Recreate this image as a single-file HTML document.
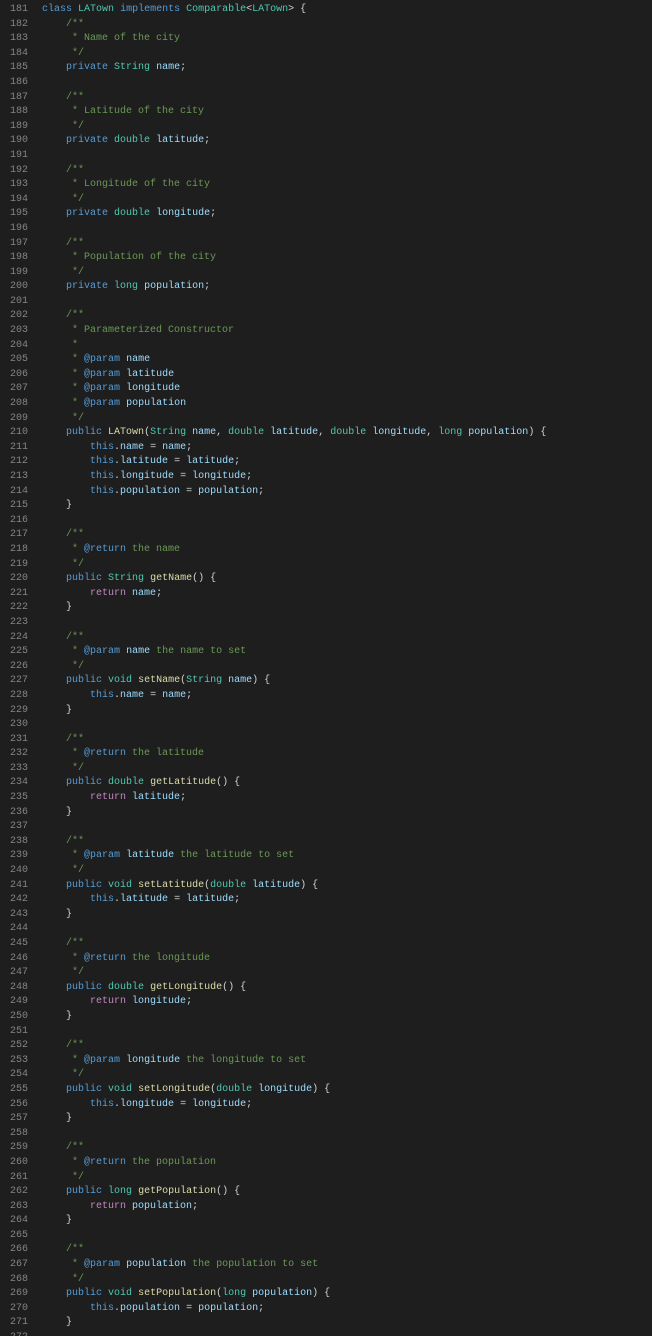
<!DOCTYPE html>
<html><head><meta charset="utf-8"><style>
html,body{margin:0;padding:0;background:#1e1e1e;width:652px;height:1336px;overflow:hidden}
.w{position:relative;top:3px;font-family:"Liberation Mono",monospace;font-size:10px;line-height:14.6px;color:#d4d4d4}
.l{height:14.6px;white-space:pre;position:relative}
.n{position:absolute;left:0;width:28px;text-align:right;color:#858585}
.x{position:absolute;left:42px}
.k{color:#569cd6}.t{color:#4ec9b0}.v{color:#9cdcfe}.f{color:#dcdcaa}.c{color:#6a9955}.r{color:#c586c0}
</style></head><body><div class="w" id="w"></div>
<script>
var L=[
'<span class="k">class</span> <span class="t">LATown</span> <span class="k">implements</span> <span class="t">Comparable</span>&lt;<span class="t">LATown</span>&gt; {',
'    <span class="c">/**</span>',
'    <span class="c"> * Name of the city</span>',
'    <span class="c"> */</span>',
'    <span class="k">private</span> <span class="t">String</span> <span class="v">name</span>;',
'',
'    <span class="c">/**</span>',
'    <span class="c"> * Latitude of the city</span>',
'    <span class="c"> */</span>',
'    <span class="k">private</span> <span class="t">double</span> <span class="v">latitude</span>;',
'',
'    <span class="c">/**</span>',
'    <span class="c"> * Longitude of the city</span>',
'    <span class="c"> */</span>',
'    <span class="k">private</span> <span class="t">double</span> <span class="v">longitude</span>;',
'',
'    <span class="c">/**</span>',
'    <span class="c"> * Population of the city</span>',
'    <span class="c"> */</span>',
'    <span class="k">private</span> <span class="t">long</span> <span class="v">population</span>;',
'',
'    <span class="c">/**</span>',
'    <span class="c"> * Parameterized Constructor</span>',
'    <span class="c"> *</span>',
'    <span class="c"> * </span><span class="k">@param</span> <span class="v">name</span>',
'    <span class="c"> * </span><span class="k">@param</span> <span class="v">latitude</span>',
'    <span class="c"> * </span><span class="k">@param</span> <span class="v">longitude</span>',
'    <span class="c"> * </span><span class="k">@param</span> <span class="v">population</span>',
'    <span class="c"> */</span>',
'    <span class="k">public</span> <span class="f">LATown</span>(<span class="t">String</span> <span class="v">name</span>, <span class="t">double</span> <span class="v">latitude</span>, <span class="t">double</span> <span class="v">longitude</span>, <span class="t">long</span> <span class="v">population</span>) {',
'        <span class="k">this</span>.<span class="v">name</span> = <span class="v">name</span>;',
'        <span class="k">this</span>.<span class="v">latitude</span> = <span class="v">latitude</span>;',
'        <span class="k">this</span>.<span class="v">longitude</span> = <span class="v">longitude</span>;',
'        <span class="k">this</span>.<span class="v">population</span> = <span class="v">population</span>;',
'    }',
''];
function getter(t,n,N){return['    <span class="c">/**</span>','    <span class="c"> * </span><span class="k">@return</span><span class="c"> the '+n+'</span>','    <span class="c"> */</span>','    <span class="k">public</span> <span class="t">'+t+'</span> <span class="f">get'+N+'</span>() {','        <span class="r">return</span> <span class="v">'+n+'</span>;','    }',''];}
function setter(t,n,N){return['    <span class="c">/**</span>','    <span class="c"> * </span><span class="k">@param</span> <span class="v">'+n+'</span><span class="c"> the '+n+' to set</span>','    <span class="c"> */</span>','    <span class="k">public</span> <span class="t">void</span> <span class="f">set'+N+'</span>(<span class="t">'+t+'</span> <span class="v">'+n+'</span>) {','        <span class="k">this</span>.<span class="v">'+n+'</span> = <span class="v">'+n+'</span>;','    }',''];}
[['String','name','Name'],['double','latitude','Latitude'],['double','longitude','Longitude'],['long','population','Population']].forEach(function(a){L=L.concat(getter(a[0],a[1],a[2]),setter(a[0],a[1],a[2]));});
var h='';for(var i=0;i<L.length&&i<93;i++){h+='<div class="l"><span class="n">'+(181+i)+'</span><span class="x">'+L[i]+'</span></div>';}
document.getElementById('w').innerHTML=h;
</script></body></html>
